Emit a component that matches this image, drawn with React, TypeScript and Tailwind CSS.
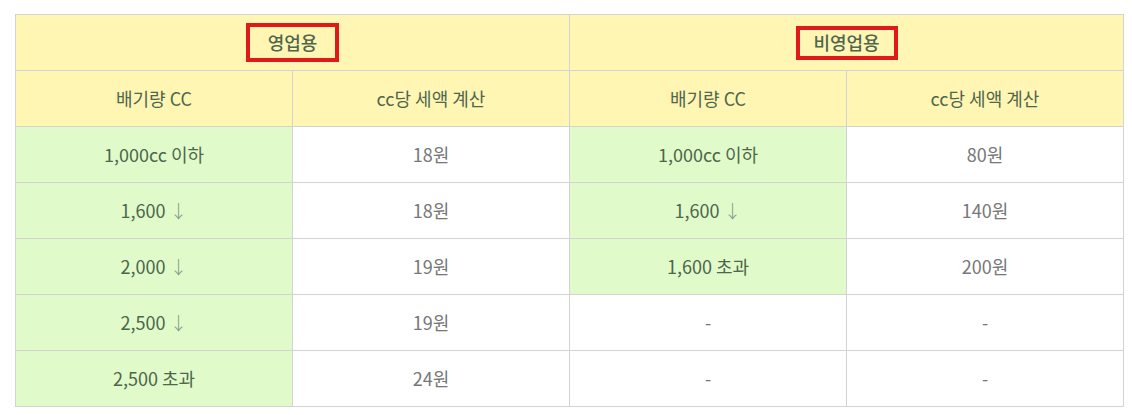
const rows: { a: string; b: string; c: string; d: string; greenC: boolean }[] = [
  { a: '1,000cc 이하', b: '18원', c: '1,000cc 이하', d: '80원', greenC: true },
  { a: '1,600 ↓', b: '18원', c: '1,600 ↓', d: '140원', greenC: true },
  { a: '2,000 ↓', b: '19원', c: '1,600 초과', d: '200원', greenC: true },
  { a: '2,500 ↓', b: '19원', c: '-', d: '-', greenC: false },
  { a: '2,500 초과', b: '24원', c: '-', d: '-', greenC: false },
];

function Label({ text }: { text: string }) {
  // the arrow is drawn lighter and thinner than the number
  if (text.endsWith('↓')) {
    return (
      <>
        {text.slice(0, -1)}
        <span className="text-[#8a968a] font-extralight">↓</span>
      </>
    );
  }
  return <>{text}</>;
}

export default function App() {
  const cell = 'border border-[#d3d3d3] h-[56px] text-center align-middle p-0';
  return (
    <div
      className="w-[1132px] h-[415px] bg-white pt-[14px] pl-[15px]"
      style={{ fontFamily: '"Noto Sans CJK KR", "Noto Sans", sans-serif' }}
    >
      <table className="border-collapse table-fixed w-[1108px] text-[18px]">
        <colgroup>
          <col className="w-[277px]" />
          <col className="w-[277px]" />
          <col className="w-[277px]" />
          <col className="w-[277px]" />
        </colgroup>
        <thead>
          <tr className="bg-[#fff6b3] text-[#50664f]">
            <th colSpan={2} className={`${cell} font-medium`}>
              <span className="inline-flex items-center justify-center w-[93px] h-[39px] border-[4px] border-[#e0191b]">
                영업용
              </span>
            </th>
            <th colSpan={2} className={`${cell} font-medium`}>
              <span className="inline-flex items-center justify-center w-[102px] h-[34px] border-[4px] border-[#e0191b]">
                비영업용
              </span>
            </th>
          </tr>
          <tr className="bg-[#fff6b3] text-[#50664f]">
            <th className={`${cell} font-normal`}>배기량 CC</th>
            <th className={`${cell} font-normal`}>cc당 세액 계산</th>
            <th className={`${cell} font-normal`}>배기량 CC</th>
            <th className={`${cell} font-normal`}>cc당 세액 계산</th>
          </tr>
        </thead>
        <tbody>
          {rows.map((r, i) => (
            <tr key={i}>
              <td className={`${cell} bg-[#e0fbc9] text-[#4d664c]`}>
                <Label text={r.a} />
              </td>
              <td className={`${cell} bg-white text-[#777777]`}>{r.b}</td>
              <td className={`${cell} ${r.greenC ? 'bg-[#e0fbc9] text-[#4d664c]' : 'bg-white text-[#777777]'}`}>
                <Label text={r.c} />
              </td>
              <td className={`${cell} bg-white text-[#777777]`}>{r.d}</td>
            </tr>
          ))}
        </tbody>
      </table>
    </div>
  );
}
